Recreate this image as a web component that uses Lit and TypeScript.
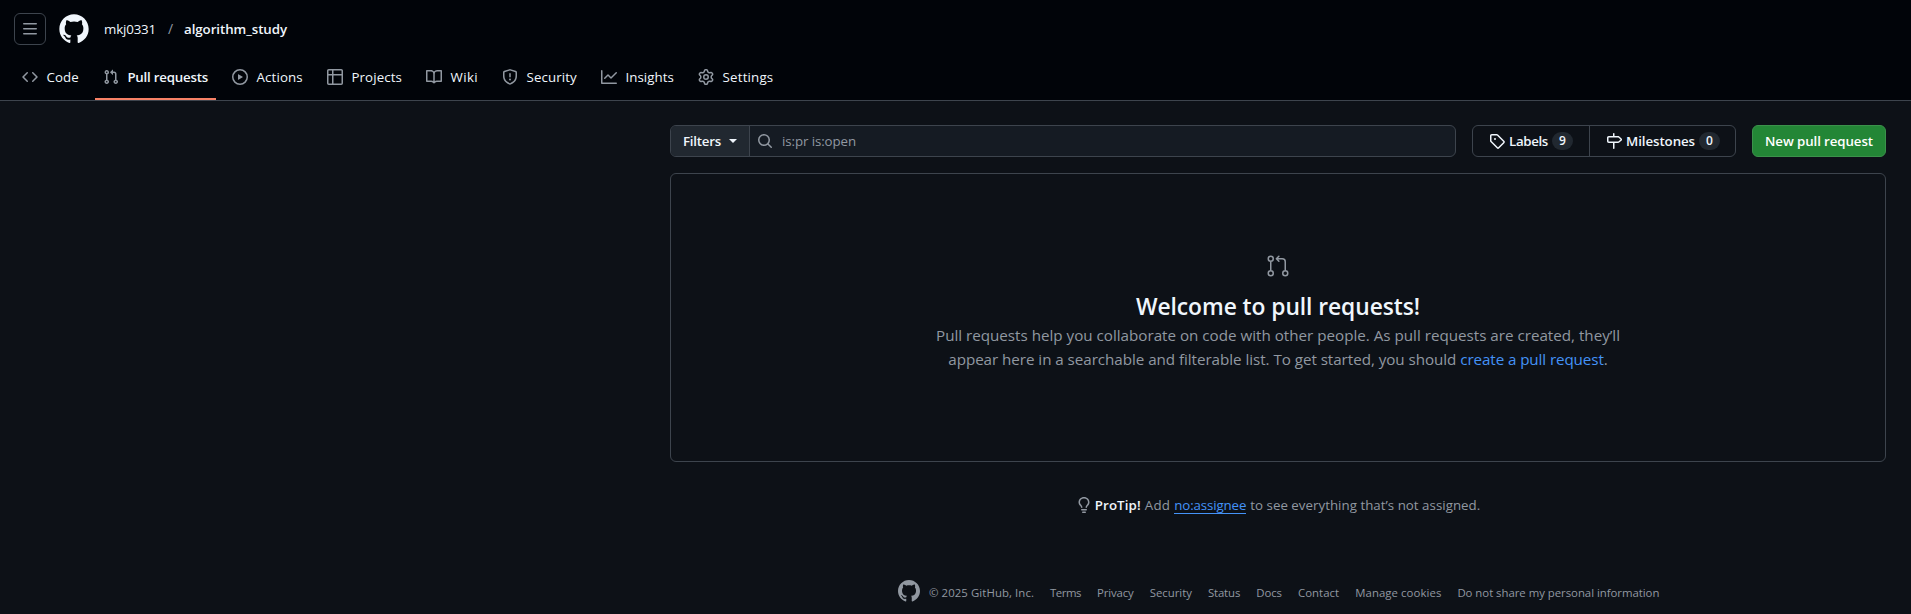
import { LitElement, html, css, svg } from "lit";
import { customElement, property } from "lit/decorators.js";

const P: Record<string, string> = {
  menu: "M1 2.75A.75.75 0 0 1 1.75 2h12.5a.75.75 0 0 1 0 1.5H1.75A.75.75 0 0 1 1 2.75Zm0 5A.75.75 0 0 1 1.75 7h12.5a.75.75 0 0 1 0 1.5H1.75A.75.75 0 0 1 1 7.75ZM1.75 12h12.5a.75.75 0 0 1 0 1.5H1.75a.75.75 0 0 1 0-1.5Z",
  code: "m11.28 3.22 4.25 4.25a.75.75 0 0 1 0 1.06l-4.25 4.25a.749.749 0 0 1-1.275-.326.749.749 0 0 1 .215-.734L13.94 8l-3.72-3.72a.749.749 0 0 1 .326-1.275.749.749 0 0 1 .734.215Zm-6.56 0a.751.751 0 0 1 1.042.018.751.751 0 0 1 .018 1.042L2.06 8l3.72 3.72a.749.749 0 0 1-.326 1.275.749.749 0 0 1-.734-.215L.47 8.53a.75.75 0 0 1 0-1.06Z",
  pr: "M1.5 3.25a2.25 2.25 0 1 1 3 2.122v5.256a2.251 2.251 0 1 1-1.5 0V5.372A2.25 2.25 0 0 1 1.5 3.25Zm5.677-.177L9.573.677A.25.25 0 0 1 10 .854V2.5h1A2.5 2.5 0 0 1 13.5 5v5.628a2.251 2.251 0 1 1-1.5 0V5a1 1 0 0 0-1-1h-1v1.646a.25.25 0 0 1-.427.177L7.177 3.427a.25.25 0 0 1 0-.354ZM3.75 2.5a.75.75 0 1 0 0 1.5.75.75 0 0 0 0-1.5Zm0 9.5a.75.75 0 1 0 0 1.5.75.75 0 0 0 0-1.5Zm8.25.75a.75.75 0 1 0 1.5 0 .75.75 0 0 0-1.5 0Z",
  play: "M8 0a8 8 0 1 1 0 16A8 8 0 0 1 8 0ZM1.5 8a6.5 6.5 0 1 0 13 0 6.5 6.5 0 0 0-13 0Zm4.879-2.773 4.264 2.559a.25.25 0 0 1 0 .428l-4.264 2.559A.25.25 0 0 1 6 10.559V5.442a.25.25 0 0 1 .379-.215Z",
  table: "M0 1.75C0 .784.784 0 1.75 0h12.5C15.216 0 16 .784 16 1.75v12.5A1.75 1.75 0 0 1 14.25 16H1.75A1.75 1.75 0 0 1 0 14.25ZM6.5 6.5v8h7.75a.25.25 0 0 0 .25-.25V6.5Zm8-1.5V1.75a.25.25 0 0 0-.25-.25H6.5V5Zm-13 1.5v7.75c0 .138.112.25.25.25H5v-8ZM5 5V1.5H1.75a.25.25 0 0 0-.25.25V5Z",
  book: "M0 1.75A.75.75 0 0 1 .75 1h4.253c1.227 0 2.317.59 3 1.501A3.743 3.743 0 0 1 11.006 1h4.245a.75.75 0 0 1 .75.75v10.5a.75.75 0 0 1-.75.75h-4.507a2.25 2.25 0 0 0-1.591.659l-.622.621a.75.75 0 0 1-1.06 0l-.622-.621A2.25 2.25 0 0 0 5.258 13H.75a.75.75 0 0 1-.75-.75Zm7.251 10.324.004-5.073-.002-2.253A2.25 2.25 0 0 0 5.003 2.5H1.5v9h3.757a3.75 3.75 0 0 1 1.994.574ZM8.755 4.75l-.004 7.322a3.752 3.752 0 0 1 1.992-.572H14.5v-9h-3.495a2.25 2.25 0 0 0-2.25 2.25Z",
  shield: "M7.467.133a1.748 1.748 0 0 1 1.066 0l5.25 1.68A1.75 1.75 0 0 1 15 3.48V7c0 1.566-.32 3.182-1.303 4.682-.983 1.498-2.585 2.813-5.032 3.855a1.697 1.697 0 0 1-1.33 0c-2.447-1.042-4.049-2.357-5.032-3.855C1.32 10.182 1 8.566 1 7V3.48a1.75 1.75 0 0 1 1.217-1.667Zm.61 1.429a.25.25 0 0 0-.153 0l-5.25 1.68a.25.25 0 0 0-.174.238V7c0 1.358.275 2.666 1.057 3.86.784 1.194 2.121 2.34 4.366 3.297a.196.196 0 0 0 .154 0c2.245-.956 3.582-2.104 4.366-3.298C13.225 9.666 13.5 8.36 13.5 7V3.48a.251.251 0 0 0-.174-.237l-5.25-1.68ZM8.75 4.75v3a.75.75 0 0 1-1.5 0v-3a.75.75 0 0 1 1.5 0ZM9 10.5a1 1 0 1 1-2 0 1 1 0 0 1 2 0Z",
  graph: "M1.5 1.75V13.5h13.75a.75.75 0 0 1 0 1.5H.75a.75.75 0 0 1-.75-.75V1.75a.75.75 0 0 1 1.5 0Zm14.28 2.53-5.25 5.25a.75.75 0 0 1-1.06 0L7 7.06 4.28 9.78a.751.751 0 0 1-1.042-.018.751.751 0 0 1-.018-1.042l3.25-3.25a.75.75 0 0 1 1.06 0L10 7.94l4.72-4.72a.751.751 0 0 1 1.042.018.751.751 0 0 1 .018 1.042Z",
  gear: "M8 0a8.2 8.2 0 0 1 .701.031C9.444.095 9.99.645 10.16 1.29l.288 1.107c.018.066.079.158.212.224.231.114.454.243.668.386.123.082.233.09.299.071l1.103-.303c.644-.176 1.392.021 1.82.63.27.385.506.792.704 1.218.315.675.111 1.422-.364 1.891l-.814.806c-.049.048-.098.147-.088.294.016.257.016.515 0 .772-.01.147.038.246.088.294l.814.806c.475.469.679 1.216.364 1.891a7.977 7.977 0 0 1-.704 1.217c-.428.61-1.176.807-1.82.63l-1.102-.302c-.067-.019-.177-.011-.3.071a5.909 5.909 0 0 1-.668.386c-.133.066-.194.158-.211.224l-.29 1.106c-.168.646-.715 1.196-1.458 1.26a8.006 8.006 0 0 1-1.402 0c-.743-.064-1.289-.614-1.458-1.26l-.289-1.106c-.018-.066-.079-.158-.212-.224a5.738 5.738 0 0 1-.668-.386c-.123-.082-.233-.09-.299-.071l-1.103.303c-.644.176-1.392-.021-1.82-.63a8.12 8.12 0 0 1-.704-1.218c-.315-.675-.111-1.422.363-1.891l.815-.806c.05-.048.098-.147.088-.294a6.214 6.214 0 0 1 0-.772c.01-.147-.038-.246-.088-.294l-.815-.806C.635 6.045.431 5.298.746 4.623a7.92 7.92 0 0 1 .704-1.217c.428-.61 1.176-.807 1.82-.63l1.102.302c.067.019.177.011.3-.071.214-.143.437-.272.668-.386.133-.066.194-.158.211-.224l.29-1.106C6.009.645 6.556.095 7.299.03 7.53.01 7.764 0 8 0Zm-.571 1.525c-.036.003-.108.036-.137.146l-.289 1.105c-.147.561-.549.967-.998 1.189-.173.086-.34.183-.5.29-.417.278-.97.423-1.529.27l-1.103-.303c-.109-.03-.175.016-.195.045-.22.312-.412.644-.573.99-.014.031-.021.11.059.19l.815.806c.411.406.562.957.53 1.456a4.709 4.709 0 0 0 0 .582c.032.499-.119 1.05-.53 1.456l-.815.806c-.081.08-.073.159-.059.19.162.346.353.677.573.989.02.03.085.076.195.046l1.102-.303c.56-.153 1.113-.008 1.53.27.161.107.328.204.501.29.447.222.85.629.997 1.189l.289 1.105c.029.109.101.143.137.146a6.6 6.6 0 0 0 1.142 0c.036-.003.108-.036.137-.146l.289-1.105c.147-.561.549-.967.998-1.189.173-.086.34-.183.5-.29.417-.278.97-.423 1.529-.27l1.103.303c.109.029.175-.016.195-.045.22-.313.411-.644.573-.99.014-.031.021-.11-.059-.19l-.815-.806c-.411-.406-.562-.957-.53-1.456a4.709 4.709 0 0 0 0-.582c-.032-.499.119-1.05.53-1.456l.815-.806c.081-.08.073-.159.059-.19a6.464 6.464 0 0 0-.573-.989c-.02-.03-.085-.076-.195-.046l-1.102.303c-.56.153-1.113.008-1.53-.27a4.44 4.44 0 0 0-.501-.29c-.447-.222-.85-.629-.997-1.189l-.289-1.105c-.029-.11-.101-.143-.137-.146a6.6 6.6 0 0 0-1.142 0ZM11 8a3 3 0 1 1-6 0 3 3 0 0 1 6 0ZM9.5 8a1.5 1.5 0 1 0-3.001.001A1.5 1.5 0 0 0 9.5 8Z",
  search: "M10.68 11.74a6 6 0 0 1-7.922-8.982 6 6 0 0 1 8.982 7.922l3.04 3.04a.749.749 0 0 1-.326 1.275.749.749 0 0 1-.734-.215ZM11.5 7a4.499 4.499 0 1 0-8.997 0A4.499 4.499 0 0 0 11.5 7Z",
  tag: "M1 7.775V2.75C1 1.784 1.784 1 2.75 1h5.025c.464 0 .91.184 1.238.513l6.25 6.25a1.75 1.75 0 0 1 0 2.474l-5.026 5.026a1.75 1.75 0 0 1-2.474 0l-6.25-6.25A1.752 1.752 0 0 1 1 7.775Zm1.5 0c0 .066.026.13.073.177l6.25 6.25a.25.25 0 0 0 .354 0l5.025-5.025a.25.25 0 0 0 0-.354l-6.25-6.25a.25.25 0 0 0-.177-.073H2.75a.25.25 0 0 0-.25.25ZM6 5a1 1 0 1 1 0 2 1 1 0 0 1 0-2Z",
  milestone: "M7.75 0a.75.75 0 0 1 .75.75V3h3.634c.414 0 .814.147 1.13.414l2.07 1.75a1.75 1.75 0 0 1 0 2.672l-2.07 1.75a1.75 1.75 0 0 1-1.13.414H8.5v5.25a.75.75 0 0 1-1.5 0V10H2.75A1.75 1.75 0 0 1 1 8.25v-3.5C1 3.784 1.784 3 2.75 3H7V.75A.75.75 0 0 1 7.75 0Zm4.384 8.5a.25.25 0 0 0 .161-.06l2.07-1.75a.248.248 0 0 0 0-.38l-2.07-1.75a.25.25 0 0 0-.161-.06H2.75a.25.25 0 0 0-.25.25v3.5c0 .138.112.25.25.25h9.384Z",
  bulb: "M8 1.5c-2.363 0-4 1.69-4 3.75 0 .984.424 1.625.984 2.304l.214.253c.223.264.47.556.673.848.284.411.537.896.621 1.49a.75.75 0 0 1-1.484.211c-.04-.282-.163-.547-.37-.847a8.456 8.456 0 0 0-.542-.68c-.084-.1-.173-.205-.268-.32C3.201 7.75 2.5 6.766 2.5 5.25 2.5 2.31 4.863 0 8 0s5.5 2.31 5.5 5.25c0 1.516-.701 2.5-1.328 3.259-.095.115-.184.22-.268.319-.207.245-.383.453-.541.681-.208.3-.33.565-.37.847a.751.751 0 0 1-1.485-.212c.084-.593.337-1.078.621-1.489.203-.292.45-.584.673-.848.075-.088.147-.173.213-.253.561-.679.985-1.32.985-2.304 0-2.06-1.637-3.75-4-3.75ZM5.75 12h4.5a.75.75 0 0 1 0 1.5h-4.5a.75.75 0 0 1 0-1.5ZM6 15.25a.75.75 0 0 1 .75-.75h2.5a.75.75 0 0 1 0 1.5h-2.5a.75.75 0 0 1-.75-.75Z",
};

const P24: Record<string, string> = {
  github: "M12 1C5.9225 1 1 5.9225 1 12C1 16.8675 4.14875 20.9787 8.52125 22.4362C9.07125 22.5325 9.2775 22.2025 9.2775 21.9137C9.2775 21.6525 9.26375 20.7862 9.26375 19.865C6.5 20.3737 5.785 19.1912 5.565 18.5725C5.44125 18.2562 4.905 17.28 4.4375 17.0187C4.0525 16.8125 3.5025 16.3037 4.42375 16.29C5.29 16.2762 5.90875 17.0875 6.115 17.4175C7.105 19.0812 8.68625 18.6137 9.31875 18.325C9.415 17.61 9.70375 17.1287 10.02 16.8537C7.5725 16.5787 5.015 15.63 5.015 11.4225C5.015 10.2262 5.44125 9.23625 6.1425 8.46625C6.0325 8.19125 5.6475 7.06375 6.2525 5.55125C6.2525 5.55125 7.17375 5.2625 9.2775 6.67875C10.1575 6.43125 11.0925 6.3075 12.0275 6.3075C12.9625 6.3075 13.8975 6.43125 14.7775 6.67875C16.8813 5.24875 17.8025 5.55125 17.8025 5.55125C18.4075 7.06375 18.0225 8.19125 17.9125 8.46625C18.6138 9.23625 19.04 10.2125 19.04 11.4225C19.04 15.6437 16.4688 16.5787 14.0213 16.8537C14.42 17.1975 14.7638 17.8575 14.7638 18.8887C14.7638 20.36 14.75 21.5425 14.75 21.9137C14.75 22.2025 14.9563 22.5462 15.5063 22.4362C19.8513 20.9787 23 16.8537 23 12C23 5.9225 18.0775 1 12 1Z",
  pr24: "M16 19.25a3.25 3.25 0 1 1 6.5 0 3.25 3.25 0 0 1-6.5 0Zm-14.5 0a3.25 3.25 0 1 1 6.5 0 3.25 3.25 0 0 1-6.5 0Zm0-14.5a3.25 3.25 0 1 1 6.5 0 3.25 3.25 0 0 1-6.5 0ZM4.75 3a1.75 1.75 0 1 0 .001 3.501A1.75 1.75 0 0 0 4.75 3Zm0 14.5a1.75 1.75 0 1 0 .001 3.501A1.75 1.75 0 0 0 4.75 17.5Zm14.5 0a1.75 1.75 0 1 0 .001 3.501 1.75 1.75 0 0 0-.001-3.501ZM4.75 7.25A.75.75 0 0 1 5.5 8v8A.75.75 0 0 1 4 16V8a.75.75 0 0 1 .75-.75Zm8.655-5.53a.75.75 0 0 1 0 1.06L12.185 4h4.065A3.75 3.75 0 0 1 20 7.75v8.75a.75.75 0 0 1-1.5 0V7.75a2.25 2.25 0 0 0-2.25-2.25h-4.064l1.22 1.22a.75.75 0 0 1-1.061 1.06l-2.5-2.5a.75.75 0 0 1 0-1.06l2.5-2.5a.75.75 0 0 1 1.06 0Z",
};

const icon = (name: string, size = 16) => {
  const large = name in P24;
  return html`<svg class="icon" width=${size} height=${size} viewBox=${large ? "0 0 24 24" : "0 0 16 16"} fill="currentColor" aria-hidden="true">
    ${svg`<path d=${large ? P24[name] : P[name]}></path>`}
  </svg>`;
};

/* A run of text whose tracking is adjusted so that it sets to a given measure. */
@customElement("set-text")
class SetText extends LitElement {
  @property({ type: Number }) w = 0;
  @property() text = "";
  static styles = css`
    :host { display: inline-block; white-space: pre; }
    .run { display: inline-block; }
  `;
  render() {
    return html`<span class="run">${this.text}</span>`;
  }
  firstUpdated() {
    const run = this.renderRoot.querySelector<HTMLElement>(".run")!;
    const natural = run.getBoundingClientRect().width;
    run.style.letterSpacing = `${(this.w - natural) / this.text.length}px`;
  }
}

const t = (text: string, w: number) => html`<set-text .text=${text} .w=${w}></set-text>`;

const TABS = [
  { icon: "code", label: "Code", w: 32.2 },
  { icon: "pr", label: "Pull requests", w: 80.6, active: true },
  { icon: "play", label: "Actions", w: 46.2 },
  { icon: "table", label: "Projects", w: 50.6 },
  { icon: "book", label: "Wiki", w: 27.4 },
  { icon: "shield", label: "Security", w: 50.2 },
  { icon: "graph", label: "Insights", w: 48.6 },
  { icon: "gear", label: "Settings", w: 50.8 },
];

const FOOTER = [
  { label: "Terms", w: 31 },
  { label: "Privacy", w: 36.7 },
  { label: "Security", w: 42.2 },
  { label: "Status", w: 32.3 },
  { label: "Docs", w: 25.8 },
  { label: "Contact", w: 41.2 },
  { label: "Manage cookies", w: 86.2 },
  { label: "Do not share my personal information", w: 202 },
];

@customElement("app-root")
class AppRoot extends LitElement {
  static styles = css`
    :host {
      display: block;
      min-height: 614px;
      background: #0d1117;
      color: #f0f6fc;
      font: 13.3px/20px "Open Sans", "Noto Sans", sans-serif;
    }
    * { box-sizing: border-box; }
    .icon { display: block; flex: none; }
    header {
      height: 101px;
      background: #010409;
      border-bottom: 1px solid #3d444d;
      padding: 13px 14px 0;
    }
    .context { display: flex; align-items: center; height: 32px; }
    .menu {
      display: grid;
      place-items: center;
      width: 32px;
      height: 32px;
      border: 1px solid #3d444d;
      border-radius: 6px;
      color: #9198a1;
    }
    .logo { margin: 0 14px 0 12px; }
    .slash { color: #9198a1; margin: 0 9px 0 10px; font-size: 14px; width: 9px; text-align: center; }
    .strong { font-weight: 600; }
    nav { display: flex; gap: 8px; height: 55px; padding-top: 8px; }
    .tab {
      display: flex;
      align-items: center;
      gap: 8.6px;
      padding: 0 8px 0;
      height: 47px;
      border-bottom: 2px solid transparent;
      border-top: 2px solid transparent;
    }
    .tab .icon { color: #9198a1; }
    .active { border-bottom-color: #f78166; font-weight: 600; }
    main { width: 1216px; margin: 24px 25px 0 auto; }
    .toolbar { display: flex; gap: 16px; height: 32px; font-weight: 600; }
    .search { display: flex; flex: 1; border: 1px solid #3d444d; border-radius: 6px; background: #151b23; overflow: hidden; }
    .filters {
      display: flex;
      align-items: center;
      gap: 8px;
      width: 79px;
      padding-left: 12px;
      background: #212830;
      border-right: 1px solid #3d444d;
    }
    .caret { border: 4px solid transparent; border-top-color: currentColor; border-bottom: 0; }
    .query { display: flex; align-items: center; gap: 9px; padding-left: 7px; color: #9198a1; font-weight: 400; }
    .group { display: flex; border: 1px solid #3d444d; border-radius: 6px; width: 264px; }
    .link { display: flex; align-items: center; gap: 4px; padding-left: 16px; width: 116px; }
    .link + .link { flex: 1; border-left: 1px solid #3d444d; }
    .count {
      width: 21px;
      height: 18px;
      border-radius: 9px;
      background: #212830;
      font-size: 12px;
      line-height: 18px;
      text-align: center;
    }
    .new {
      display: grid;
      place-items: center;
      width: 134px;
      border: 1px solid #3b924b;
      border-radius: 6px;
      background: #238636;
      color: #fff;
    }
    .blank {
      display: flex;
      flex-direction: column;
      align-items: center;
      height: 289px;
      margin-top: 16px;
      padding-top: 80px;
      border: 1px solid #3d444d;
      border-radius: 6px;
      color: #9198a1;
      font-size: 15.2px;
      line-height: 24px;
    }
    .blank h3 { margin: 11px 0 -2px; color: #f0f6fc; font-size: 22.8px; line-height: 36px; font-weight: 600; }
    .line { display: flex; white-space: pre; }
    .blue { color: #4493f8; }
    .tip { display: flex; justify-content: center; align-items: center; margin-top: 33px; color: #9198a1; gap: 4px; }
    .tip .strong { color: #f0f6fc; }
    .tip .icon { margin-right: -1px; }
    .under { border-bottom: 1px solid #4493f8; height: 19px; margin-bottom: 1px; }
    .under set-text { height: 18px; }
    footer { display: flex; gap: 16px; margin-top: 64px; padding-left: 897px; color: #9198a1; font-size: 11.4px; line-height: 18px; align-items: flex-start; }
    .owner { display: flex; gap: 8px; }
    footer set-text { margin-top: 5px; }
  `;

  render() {
    return html`
      <header>
        <div class="context">
          <div class="menu">${icon("menu")}</div>
          <div class="logo">${icon("github", 32)}</div>
          ${t("mkj0331", 52)}
          <span class="slash">/</span>
          <span class="strong">${t("algorithm_study", 103)}</span>
        </div>
        <nav>
          ${TABS.map((x) => html`<div class="tab ${x.active ? "active" : ""}">${icon(x.icon)}${t(x.label, x.w)}</div>`)}
        </nav>
      </header>
      <main>
        <div class="toolbar">
          <div class="search">
            <div class="filters">${t("Filters", 38)}<span class="caret"></span></div>
            <div class="query">${icon("search")}${t("is:pr is:open", 74)}</div>
          </div>
          <div class="group">
            <div class="link">${icon("tag")}${t("Labels", 39)}<span class="count">9</span></div>
            <div class="link">${icon("milestone")}${t("Milestones", 69)}<span class="count">0</span></div>
          </div>
          <div class="new">${t("New pull request", 108)}</div>
        </div>
        <section class="blank">
          ${icon("pr24", 24)}
          <h3>${t("Welcome to pull requests!", 284)}</h3>
          <div class="line">${t("Pull requests help you collaborate on code with other people. As pull requests are created, they’ll", 684)}</div>
          <div class="line">${t("appear here in a searchable and filterable list. To get started, you should ", 512)}<span class="blue">${t("create a pull request", 143.5)}</span>.</div>
        </section>
        <div class="tip">
          ${icon("bulb")}<span class="strong">${t("ProTip!", 46)}</span>${t("Add", 25.5)}
          <span class="blue under">${t("no:assignee", 72)}</span>${t("to see everything that’s not assigned.", 230)}
        </div>
      </main>
      <footer>
        <div class="owner">${icon("github", 24)}${t("© 2025 GitHub, Inc.", 105)}</div>
        ${FOOTER.map((x) => t(x.label, x.w))}
      </footer>
    `;
  }
}
